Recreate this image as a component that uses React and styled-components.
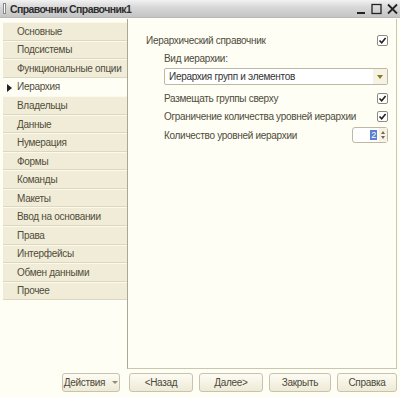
import React from 'react';
import styled, { createGlobalStyle } from 'styled-components';

const Global = createGlobalStyle`
  html, body { margin: 0; padding: 0; background: #fefef4; }
  * { box-sizing: border-box; }
`;

const Window = styled.div`
  width: 400px;
  height: 397px;
  display: flex;
  flex-direction: column;
  background: #fefef4;
  font-family: "Liberation Sans", Arial, sans-serif;
  font-size: 10px;
  letter-spacing: -0.3px;
  color: #4f4c3c;
  overflow: hidden;
`;

const TitleBar = styled.div`
  height: 18px;
  display: flex;
  align-items: center;
  padding: 0 2px 0 3px;
  background: linear-gradient(#f2f2f2, #d9d9d9 40%, #c4c4c4);
  border-bottom: 1px solid #b8b8b8;
`;

const TitleIcon = styled.span`
  width: 3px;
  height: 11px;
  border: 1px solid #8a8a8a;
  background: #fff;
  margin-right: 4px;
`;

const Title = styled.span`
  flex: 1;
  font-weight: bold;
  font-size: 10.5px;
  letter-spacing: -0.6px;
  color: #2e2e2e;
`;

const Controls = styled.div`
  display: flex;
  align-items: center;
  gap: 5px;
  color: #222;
`;

const Body = styled.div`
  flex: 1;
  display: flex;
  padding: 1px 3px 0 3px;
`;

const TabList = styled.div`
  width: 124px;
  padding-top: 3px;
  display: flex;
  flex-direction: column;
`;

const Tab = styled.div`
  height: 18.55px;
  display: flex;
  align-items: center;
  padding-left: 14px;
  position: relative;
  background: ${p => (p.$active ? 'transparent' : '#f0ecd7')};
  border-bottom: 1px solid ${p => (p.$active ? 'transparent' : '#dcd7bf')};
  border-top: 1px solid ${p => (p.$active ? 'transparent' : '#fbf9ee')};
  white-space: nowrap;
  color: #514d3c;
`;

const Arrow = styled.span`
  position: absolute;
  left: 4px;
  top: 5px;
  width: 0;
  height: 0;
  border-left: 5px solid #222;
  border-top: 4px solid transparent;
  border-bottom: 4px solid transparent;
`;

const Panel = styled.div`
  flex: 1;
  height: 350px;
  border: 1px solid #c9c6b4;
  border-left-color: #a9a795;
  border-top: none;
  padding: 12px 8px 0 18px;
  display: flex;
  flex-direction: column;
`;

const Row = styled.div`
  height: 18.5px;
  display: flex;
  align-items: center;
  justify-content: space-between;
  white-space: nowrap;
  padding-left: ${p => p.$indent || 0}px;
`;

const Check = styled.span`
  width: 11px;
  height: 11px;
  border: 1px solid #8e8c80;
  border-radius: 2px;
  background: #fff;
  display: flex;
  align-items: center;
  justify-content: center;
`;

const Select = styled.div`
  margin: 0 0 4px 18px;
  height: 17px;
  display: flex;
  align-items: center;
  background: #fff;
  border: 1px solid #bdb9a5;
  border-radius: 2px;
  padding-left: 4px;
  color: #333;
`;

const SelectText = styled.span`
  flex: 1;
`;

const SelectBtn = styled.span`
  width: 14px;
  height: 100%;
  display: flex;
  align-items: center;
  justify-content: center;
  background: #f6f3e4;
  &::after {
    content: '';
    border-top: 4px solid #8b7a1e;
    border-left: 3.5px solid transparent;
    border-right: 3.5px solid transparent;
  }
`;

const Spin = styled.div`
  width: 36px;
  height: 16px;
  display: flex;
  align-items: center;
  justify-content: flex-end;
  border: 1px solid #bdb9a5;
  border-radius: 3px;
  background: #fff;
`;

const SpinValue = styled.span`
  background: #5a7fd0;
  color: #fff;
  font-size: 9px;
  line-height: 10px;
  padding: 0 1px;
  margin-right: 2px;
`;

const SpinArrows = styled.span`
  width: 8px;
  height: 100%;
  display: flex;
  flex-direction: column;
  align-items: center;
  justify-content: center;
  gap: 2px;
  background: #f6f3e4;
  &::before, &::after {
    content: '';
    border-left: 2.5px solid transparent;
    border-right: 2.5px solid transparent;
  }
  &::before { border-bottom: 3px solid #6f6a50; }
  &::after { border-top: 3px solid #6f6a50; }
`;

const ButtonBar = styled.div`
  height: 28px;
  display: flex;
  align-items: flex-start;
  justify-content: flex-end;
  gap: 6px;
  padding: 4px 3px 0 0;
`;

const Button = styled.div`
  width: ${p => p.$w}px;
  height: 19px;
  display: flex;
  align-items: center;
  justify-content: center;
  gap: 7px;
  border: 1px solid #c7c3ad;
  border-radius: 3px;
  background: linear-gradient(#fdfcf4, #eeead6);
  color: #4b4939;
  ${p => p.$first && 'margin-right: 3px;'}
`;

const Caret = styled.span`
  border-top: 3px solid #8f8b78;
  border-left: 3px solid transparent;
  border-right: 3px solid transparent;
`;

const tabs = [
  'Основные', 'Подсистемы', 'Функциональные опции', 'Иерархия', 'Владельцы',
  'Данные', 'Нумерация', 'Формы', 'Команды', 'Макеты', 'Ввод на основании',
  'Права', 'Интерфейсы', 'Обмен данными', 'Прочее',
];

const Tick = () => (
  <svg width="9" height="9" viewBox="0 0 9 9">
    <path d="M1.5 4.5 L3.7 6.8 L7.6 2" fill="none" stroke="#222" strokeWidth="1.6" />
  </svg>
);

export default function App() {
  return (
    <Window>
      <Global />
      <TitleBar>
        <TitleIcon />
        <Title>Справочник Справочник1</Title>
        <Controls>
          <svg width="10" height="12" viewBox="0 0 10 12"><rect x="1" y="9" width="8" height="2" fill="#222" /></svg>
          <svg width="11" height="12" viewBox="0 0 11 12"><rect x="1" y="1.5" width="9" height="9" fill="none" stroke="#222" strokeWidth="1.3" /></svg>
          <svg width="11" height="12" viewBox="0 0 11 12"><path d="M1 1.5 L10 10.5 M10 1.5 L1 10.5" stroke="#222" strokeWidth="1.8" /></svg>
        </Controls>
      </TitleBar>
      <Body>
        <TabList>
          {tabs.map(t => (
            <Tab key={t} $active={t === 'Иерархия'}>
              {t === 'Иерархия' && <Arrow />}
              {t}
            </Tab>
          ))}
        </TabList>
        <Panel>
          <Row>
            <span>Иерархический справочник</span>
            <Check><Tick /></Check>
          </Row>
          <Row $indent={18}>
            <span>Вид иерархии:</span>
          </Row>
          <Select>
            <SelectText>Иерархия групп и элементов</SelectText>
            <SelectBtn />
          </Select>
          <Row $indent={18}>
            <span>Размещать группы сверху</span>
            <Check><Tick /></Check>
          </Row>
          <Row $indent={18}>
            <span>Ограничение количества уровней иерархии</span>
            <Check><Tick /></Check>
          </Row>
          <Row $indent={18}>
            <span>Количество уровней иерархии</span>
            <Spin>
              <SpinValue>2</SpinValue>
              <SpinArrows />
            </Spin>
          </Row>
        </Panel>
      </Body>
      <ButtonBar>
        <Button $w={58} $first>Действия <Caret /></Button>
        <Button $w={64}>&lt;Назад</Button>
        <Button $w={64}>Далее&gt;</Button>
        <Button $w={62}>Закрыть</Button>
        <Button $w={60}>Справка</Button>
      </ButtonBar>
    </Window>
  );
}
